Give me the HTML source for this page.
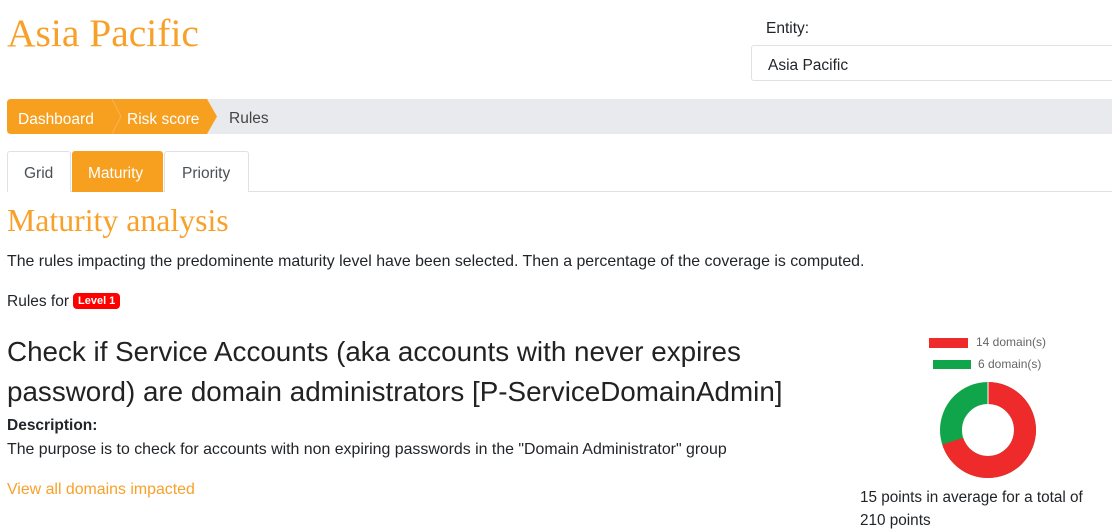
<!DOCTYPE html>
<html><head><style>
body{margin:0;width:1112px;height:529px;overflow:hidden;background:#fff;font-family:"Liberation Sans",sans-serif;color:#212529;position:relative}
.a{position:absolute;white-space:nowrap}
.serif{font-family:"Liberation Serif",serif;color:#f7a12a}
</style></head><body>
<div class="a serif" style="left:7px;top:10px;font-size:39.5px">Asia Pacific</div>
<div class="a" style="left:766px;top:20px;font-size:15.5px">Entity:</div>
<div class="a" style="left:751px;top:45px;width:380px;height:36px;border:1px solid #dee2e6;border-radius:3px;box-sizing:border-box"></div>
<div class="a" style="left:768px;top:57px;font-size:15.5px">Asia Pacific</div>

<div class="a" style="left:7px;top:99px;width:1105px;height:35px;background:#e9eaee;border-radius:4px 0 0 4px"></div>
<svg class="a" style="left:7px;top:99px" width="210" height="35"><path d="M4 0H200L210 17.5L200 35H4Q0 35 0 31V4Q0 0 4 0Z" fill="#f7a020"/><path d="M105 0L114 17.5L105 35" stroke="#f9b34f" fill="none"/></svg>
<div class="a" style="left:18px;top:111px;font-size:15.5px;color:#fff">Dashboard</div>
<div class="a" style="left:127px;top:111px;font-size:15.5px;color:#fff">Risk score</div>
<div class="a" style="left:229px;top:110px;font-size:15.5px;color:#444">Rules</div>

<div class="a" style="left:7px;top:191px;width:1105px;border-top:1px solid #dee2e6"></div>
<div class="a" style="left:7px;top:151px;width:64px;height:41px;border:1px solid #dee2e6;border-bottom:none;border-radius:3px 3px 0 0;box-sizing:border-box;background:#fff"></div>
<div class="a" style="left:72px;top:151px;width:91px;height:41px;background:#f7a020;border-radius:3px 3px 0 0"></div>
<div class="a" style="left:164px;top:151px;width:85px;height:41px;border:1px solid #dee2e6;border-bottom:none;border-radius:3px 3px 0 0;box-sizing:border-box;background:#fff"></div>
<div class="a" style="left:24px;top:165px;font-size:15.5px;color:#495057">Grid</div>
<div class="a" style="left:88px;top:165px;font-size:15.5px;color:#fff">Maturity</div>
<div class="a" style="left:182px;top:165px;font-size:15.5px;color:#495057">Priority</div>

<div class="a serif" style="left:7px;top:203px;font-size:31.8px">Maturity analysis</div>
<div class="a" style="left:7px;top:253px;font-size:15.9px">The rules impacting the predominente maturity level have been selected. Then a percentage of the coverage is computed.</div>
<div class="a" style="left:7px;top:293px;font-size:15.5px">Rules for</div>
<div class="a" style="left:73px;top:293px;background:#f00;color:#fff;font-size:11px;font-weight:bold;padding:2px 5px;border-radius:4px">Level 1</div>

<div class="a" style="left:7px;top:332px;font-size:27.8px;line-height:40px;color:#222">Check if Service Accounts (aka accounts with never expires<br>password) are domain administrators [P-ServiceDomainAdmin]</div>
<div class="a" style="left:7px;top:417px;font-size:15.5px;font-weight:bold">Description:</div>
<div class="a" style="left:7px;top:441px;font-size:15.9px">The purpose is to check for accounts with non expiring passwords in the "Domain Administrator" group</div>
<div class="a" style="left:7px;top:481px;font-size:15.9px;color:#f7a12a">View all domains impacted</div>

<div class="a" style="left:929px;top:338px;width:39px;height:10px;background:#ee2a2a"></div>
<div class="a" style="left:976px;top:335px;font-size:12px;color:#666">14 domain(s)</div>
<div class="a" style="left:933px;top:360px;width:38px;height:9px;background:#10a54a"></div>
<div class="a" style="left:978px;top:357px;font-size:12px;color:#666">6 domain(s)</div>
<svg class="a" style="left:938px;top:380px" width="100" height="100"><g transform="rotate(-90 50 50)"><circle cx="50" cy="50" r="37" fill="none" stroke="#10a54a" stroke-width="22"/><circle cx="50" cy="50" r="37" fill="none" stroke="#ee2a2a" stroke-width="22" stroke-dasharray="162.7 300"/></g><line x1="50" y1="2" x2="50" y2="27" stroke="#fff"/></svg>
<div class="a" style="left:860px;top:486px;font-size:15.3px;line-height:23px">15 points in average for a total of<br>210 points</div>
</body></html>
